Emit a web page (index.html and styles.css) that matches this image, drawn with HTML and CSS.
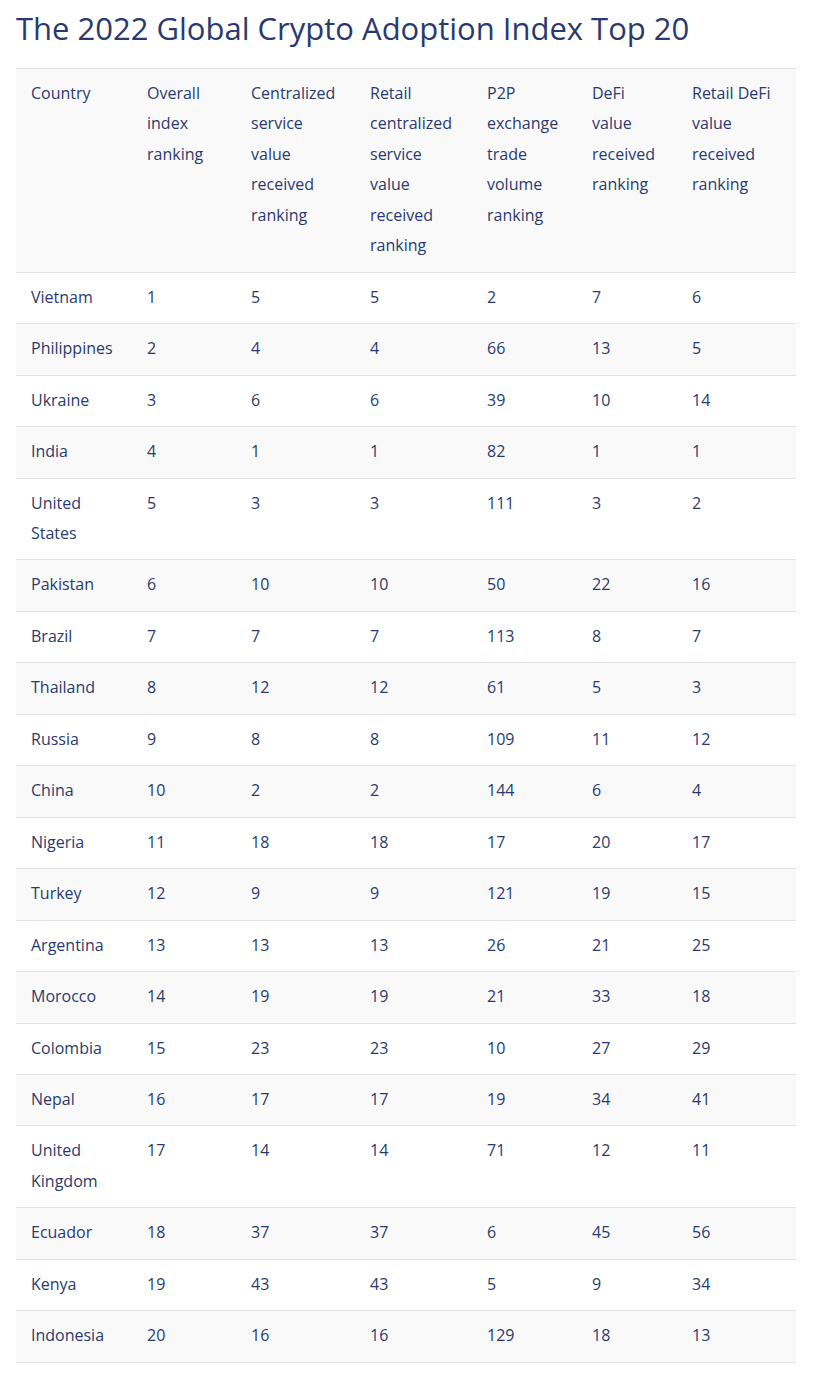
FILE: index.html
```html
<!DOCTYPE html>
<html>
<head>
<meta charset="utf-8">
<link rel="stylesheet" href="styles.css">
</head>
<body>
<h1 class="title">The 2022 Global Crypto Adoption Index Top 20</h1>
<table class="data">
<colgroup>
<col class="c1"><col class="c2"><col class="c3"><col class="c4"><col class="c5"><col class="c6"><col class="c7">
</colgroup>
<thead>
<tr><th>Country</th><th>Overall index ranking</th><th>Centralized service value received ranking</th><th>Retail centralized service value received ranking</th><th>P2P exchange trade volume ranking</th><th>DeFi value received ranking</th><th>Retail DeFi value received ranking</th></tr>
</thead>
<tbody>
<tr><td>Vietnam</td><td>1</td><td>5</td><td>5</td><td>2</td><td>7</td><td>6</td></tr>
<tr><td>Philippines</td><td>2</td><td>4</td><td>4</td><td>66</td><td>13</td><td>5</td></tr>
<tr><td>Ukraine</td><td>3</td><td>6</td><td>6</td><td>39</td><td>10</td><td>14</td></tr>
<tr><td>India</td><td>4</td><td>1</td><td>1</td><td>82</td><td>1</td><td>1</td></tr>
<tr><td>United States</td><td>5</td><td>3</td><td>3</td><td>111</td><td>3</td><td>2</td></tr>
<tr><td>Pakistan</td><td>6</td><td>10</td><td>10</td><td>50</td><td>22</td><td>16</td></tr>
<tr><td>Brazil</td><td>7</td><td>7</td><td>7</td><td>113</td><td>8</td><td>7</td></tr>
<tr><td>Thailand</td><td>8</td><td>12</td><td>12</td><td>61</td><td>5</td><td>3</td></tr>
<tr><td>Russia</td><td>9</td><td>8</td><td>8</td><td>109</td><td>11</td><td>12</td></tr>
<tr><td>China</td><td>10</td><td>2</td><td>2</td><td>144</td><td>6</td><td>4</td></tr>
<tr><td>Nigeria</td><td>11</td><td>18</td><td>18</td><td>17</td><td>20</td><td>17</td></tr>
<tr><td>Turkey</td><td>12</td><td>9</td><td>9</td><td>121</td><td>19</td><td>15</td></tr>
<tr><td>Argentina</td><td>13</td><td>13</td><td>13</td><td>26</td><td>21</td><td>25</td></tr>
<tr><td>Morocco</td><td>14</td><td>19</td><td>19</td><td>21</td><td>33</td><td>18</td></tr>
<tr><td>Colombia</td><td>15</td><td>23</td><td>23</td><td>10</td><td>27</td><td>29</td></tr>
<tr><td>Nepal</td><td>16</td><td>17</td><td>17</td><td>19</td><td>34</td><td>41</td></tr>
<tr><td>United Kingdom</td><td>17</td><td>14</td><td>14</td><td>71</td><td>12</td><td>11</td></tr>
<tr><td>Ecuador</td><td>18</td><td>37</td><td>37</td><td>6</td><td>45</td><td>56</td></tr>
<tr><td>Kenya</td><td>19</td><td>43</td><td>43</td><td>5</td><td>9</td><td>34</td></tr>
<tr><td>Indonesia</td><td>20</td><td>16</td><td>16</td><td>129</td><td>18</td><td>13</td></tr>
</tbody>
</table>
</body>
</html>
```
FILE: styles.css
```css
html, body {
  margin: 0;
  padding: 0;
  background: #ffffff;
}
body {
  padding: 0 18px 0 16px;
  font-family: "Open Sans", "Noto Sans", sans-serif;
  color: #2a3a70;
}
.title {
  margin: 0;
  padding-top: 8px;
  height: 60px;
  font-size: 31px;
  font-weight: 400;
  line-height: 40px;
  color: #2a3a70;
  letter-spacing: 0;
}
.data {
  width: 780px;
  border-collapse: collapse;
  table-layout: fixed;
  font-size: 16px;
  line-height: 30.45px;
  border-top: 1px solid #e2e2e2;
}
.c1 { width: 116px; }
.c2 { width: 104px; }
.c3 { width: 119px; }
.c4 { width: 117px; }
.c5 { width: 105px; }
.c6 { width: 100px; }
.c7 { width: 119px; }
.data th, .data td {
  text-align: left;
  vertical-align: top;
  font-weight: 400;
  padding: 9px 10px 11px 15px;
  border-bottom: 1px solid #e2e2e2;
}
.data thead tr {
  background: #f9f9f9;
}
.data tbody tr:nth-child(even) {
  background: #f9f9f9;
}
```
